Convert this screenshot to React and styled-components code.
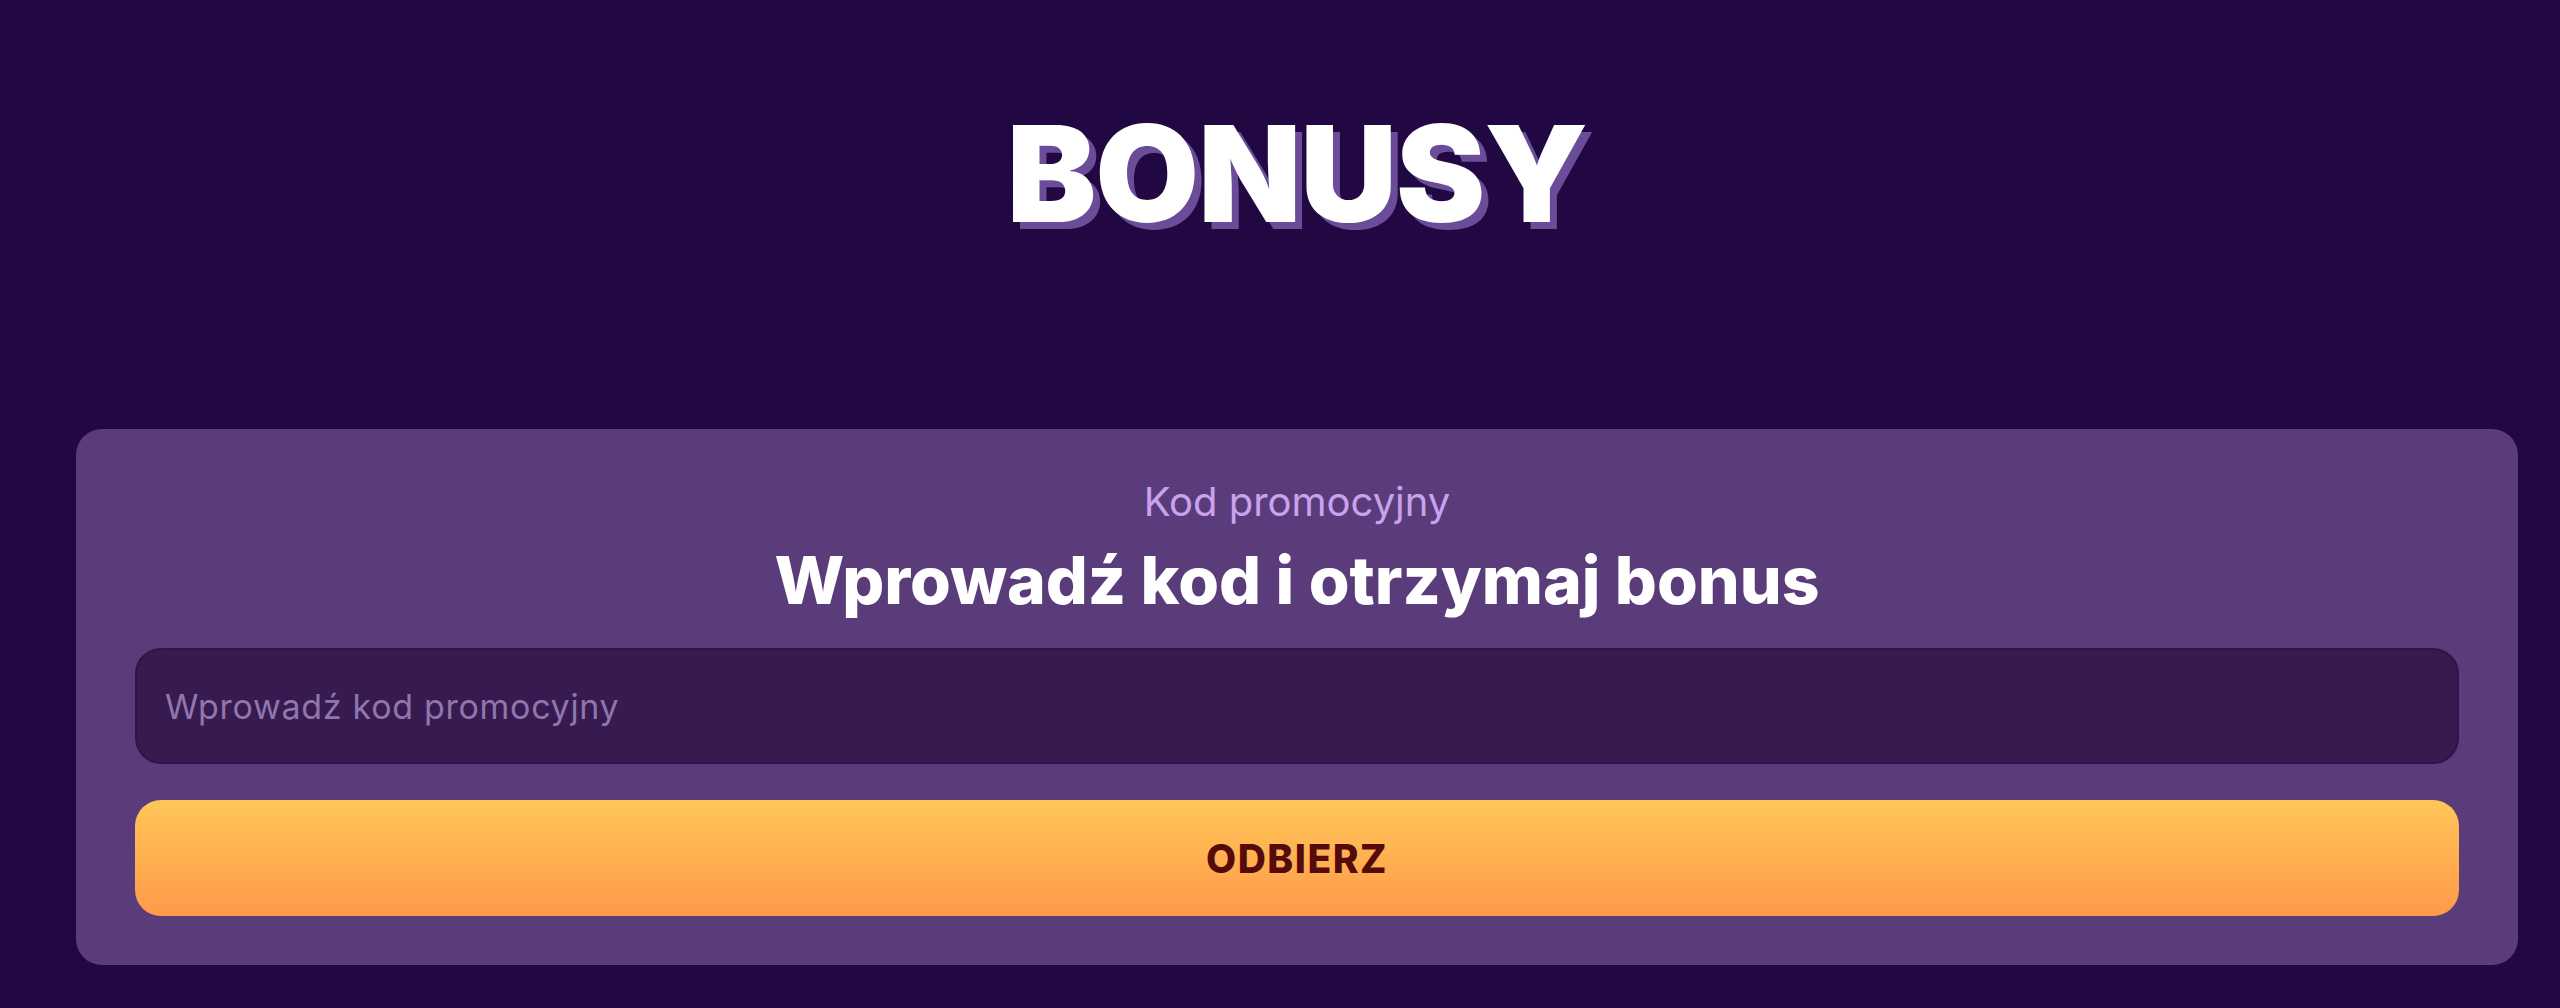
import React from "react";
import styled, { createGlobalStyle } from "styled-components";

const GlobalStyle = createGlobalStyle`
	html, body {
		margin: 0;
		padding: 0;
		background-color: #210843;
	}
	body {
		font-family: Inter, "Noto Sans", sans-serif;
	}
	* {
		box-sizing: border-box;
	}
`;

const Page = styled.div`
	min-height: 1008px;
	background-color: #210843;
	padding: 94px 42px 0 76px;
	display: flex;
	flex-direction: column;
	align-items: stretch;
`;

const Title = styled.h1`
	margin: 0;
	text-align: center;
	font-family: Inter, sans-serif;
	font-weight: 900;
	font-size: 134px;
	line-height: 158px;
	letter-spacing: -1px;
	color: #ffffff;
	text-shadow: 7px 7px 0 #6a4c98;
`;

const Card = styled.section`
	margin-top: 177px;
	background-color: #5b3c7a;
	border-radius: 26px;
	padding: 50px 59px 49px;
	display: flex;
	flex-direction: column;
	align-items: stretch;
`;

const Label = styled.div`
	text-align: center;
	font-size: 40px;
	line-height: 46px;
	font-weight: 400;
	color: #c9a2ee;
`;

const Heading = styled.h2`
	margin: 15px 0 28px;
	text-align: center;
	font-size: 66px;
	line-height: 80px;
	font-weight: 800;
	color: #ffffff;
`;

const Input = styled.input`
	height: 116px;
	width: 100%;
	border: 2px solid #2f1547;
	border-radius: 26px;
	background-color: #371a4f;
	padding: 0 28px;
	font-family: Inter, sans-serif;
	font-size: 34px;
	letter-spacing: 0.7px;
	color: #ffffff;
	outline: none;

	&::placeholder {
		color: #8f76ac;
	}
`;

const ClaimButton = styled.button`
	margin-top: 36px;
	height: 116px;
	width: 100%;
	border: none;
	border-radius: 26px;
	background: linear-gradient(180deg, #ffc657 0%, #ff9a4b 100%);
	font-family: Inter, sans-serif;
	font-weight: 800;
	font-size: 39px;
	letter-spacing: 1.5px;
	color: #560b0b;
	cursor: pointer;
`;

export default function App() {
	return (
		<>
			<GlobalStyle />
			<Page>
				<Title>BONUSY</Title>
				<Card>
					<Label>Kod promocyjny</Label>
					<Heading>Wprowadź kod i otrzymaj bonus</Heading>
					<Input type="text" placeholder="Wprowadź kod promocyjny" />
					<ClaimButton>ODBIERZ</ClaimButton>
				</Card>
			</Page>
		</>
	);
}
